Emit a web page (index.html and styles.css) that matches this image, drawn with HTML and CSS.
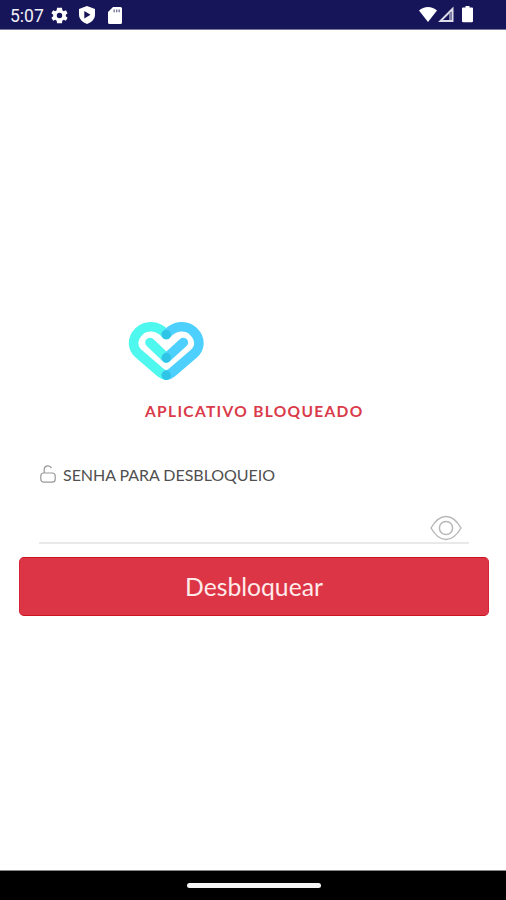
FILE: index.html
```html
<!DOCTYPE html>
<html lang="pt-BR">
<head>
<meta charset="utf-8">
<title>Aplicativo bloqueado</title>
<link rel="stylesheet" href="styles.css">
</head>
<body>
<header class="status">
  <span class="time">5:07</span>
  <svg class="gear" viewBox="2 2 20 20" width="17" height="17"><path fill="#fff" fill-rule="evenodd" d="M19.4 13a7.500 7.500 0 0 0 0-2l2.100-1.600-2-3.500-2.500 1a7 7 0 0 0-1.700-1L14.900 3H9.100l-.4 2.900a7 7 0 0 0-1.700 1l-2.500-1-2 3.500L4.600 11a7.500 7.500 0 0 0 0 2l-2.100 1.600 2 3.500 2.500-1a7 7 0 0 0 1.700 1l.4 2.900h5.800l.4-2.900a7 7 0 0 0 1.700-1l2.500 1 2-3.500zM12 15.200a3.200 3.200 0 1 1 0-6.400 3.200 3.200 0 0 1 0 6.400z"/></svg>
  <svg class="shield" viewBox="0 0 16 18" width="16" height="18"><path fill="#fff" d="M8 0l8 3v5.500c0 4.500-3.500 8-8 9.500-4.500-1.500-8-5-8-9.500V3z"/><path fill="#171559" d="M5.300 5l6.200 3.700-6.200 3.700z"/></svg>
  <svg class="card" viewBox="0 0 14 17" width="14" height="17"><path fill="#fff" d="M5 0h7.500A1.500 1.500 0 0 1 14 1.500v14a1.500 1.500 0 0 1-1.500 1.500h-11A1.500 1.500 0 0 1 0 15.500V5z"/><path stroke="#77779d" stroke-width="1.400" d="M6.200 2.500v2.800M8.700 2.500v2.800M11.200 2.500v2.800"/></svg>
  <svg class="signals" viewBox="0 0 56 18" width="56" height="18"><path fill="#fff" d="M0 4.500C5-.2 13-.2 18 4.500L9 16z"/><path fill="none" stroke="#dddde9" stroke-width="2" d="M33.500 3v12h-12z"/><path stroke="#aaaac6" stroke-width="1.500" d="M31 7v7"/><path fill="#fff" d="M46.500 0h4v1.500H53a1 1 0 0 1 1 1V15a1.200 1.200 0 0 1-1.200 1.200h-8.600A1.200 1.200 0 0 1 43 15V2.500a1 1 0 0 1 1-1h2.500z"/></svg>
</header>
<main class="screen">
  <svg class="logo" viewBox="128 320 78 62" width="78" height="62" fill="none" stroke-width="9.600" stroke-linecap="round" stroke-linejoin="round">
    <path stroke="#4ff8ee" d="M166.300 334.500C157.500 324.500 145.500 325 139 331.500C131.500 339 132 348 139 354L160.500 372.500Q163.500 375 166.300 375.200M150 342.500L166.300 358"/>
    <path stroke="#4dd0fd" d="M166.300 334.500C175 324.500 187 325 193.500 331.500C201 339 200.500 348 193.500 354L172 372.500Q169 375 166.300 375.200M183.300 342.500L166.300 358"/>
    <g fill="#2fc5e6"><circle cx="166.300" cy="334.600" r="4.700"/><circle cx="166.300" cy="357.800" r="4.700"/><circle cx="166.300" cy="375.200" r="4.700"/></g>
  </svg>
  <h1 class="title">APLICATIVO BLOQUEADO</h1>
  <form class="form">
    <label class="label" for="senha">
      <svg viewBox="0 0 16 20" width="16" height="20" fill="none" stroke="#999" stroke-width="1.200"><rect x=".8" y="9" width="14.400" height="9.200" rx="3"/><path d="M4.200 9V5.500a3.800 3.800 0 0 1 7.300-1.300"/></svg>
      <span>SENHA PARA DESBLOQUEIO</span>
    </label>
    <div class="field">
      <input id="senha" type="password">
      <svg viewBox="0 0 32 26" width="32" height="26" fill="none" stroke="#b8b8b8" stroke-width="1.500"><path d="M1 13C5 6 10 1.500 16 1.500S27 6 31 13C27 20 22 24.500 16 24.500S5 20 1 13z"/><circle cx="16" cy="13" r="6.600"/></svg>
    </div>
    <button class="unlock" type="button">Desbloquear</button>
  </form>
</main>
<footer class="nav"><div class="handle"></div></footer>
</body>
</html>
```
FILE: styles.css
```css
* { box-sizing: border-box; }
body {
  margin: 0;
  height: 900px;
  display: flex;
  flex-direction: column;
  overflow: hidden;
  background: #fff;
  font-family: Lato, sans-serif;
}
svg { display: block; flex: none; }
.status {
  height: 30px;
  flex: none;
  display: flex;
  align-items: center;
  padding: 1px 31px 0 10px;
  background: #171559;
  border-bottom: 1px solid #77769a;
}
.time {
  width: 41px;
  padding-top: 2px;
  font: 17.500px/20px Roboto, sans-serif;
  color: #f0f0f6;
  white-space: nowrap;
}
.shield { margin-left: 11px; }
.card { margin-left: 13px; }
.signals { margin-left: auto; }
.screen { flex: 1; padding-top: 290px; }
.logo { margin-left: 128px; }
.title {
  margin: 19px 0 0 145px;
  font-size: 15.500px;
  line-height: 20px;
  font-weight: 700;
  letter-spacing: 1.330px;
  color: #da3a49;
  white-space: nowrap;
}
.form { padding: 43px 17px 0 19px; }
.label {
  display: flex;
  align-items: center;
  gap: 7px;
  height: 20px;
  padding-left: 21px;
  font-size: 16px;
  letter-spacing: -.04px;
  color: #505050;
  white-space: nowrap;
}
.field {
  display: flex;
  height: 60px;
  margin: 0 20px;
  padding: 31px 7px 0 0;
  border-bottom: 2px solid #e9e9e9;
}
.field input {
  flex: 1;
  min-width: 0;
  border: 0;
  outline: 0;
  background: transparent;
}
.unlock {
  display: block;
  width: 470px;
  height: 59px;
  margin-top: 13px;
  padding: 1px 0 0;
  border: 1px solid #cb1522;
  border-left-color: #d32438;
  border-right-color: #d32438;
  border-radius: 5px;
  background: #dc3545;
  color: #ffeaea;
  font: 24.700px/32px Lato, sans-serif;
}
.nav {
  height: 30px;
  flex: none;
  background: #000;
  border-top: 1px solid #888;
  padding-top: 12px;
}
.handle {
  width: 134px;
  height: 5px;
  margin-left: 187px;
  border-radius: 3px;
  background: #f4f4f4;
}
```
